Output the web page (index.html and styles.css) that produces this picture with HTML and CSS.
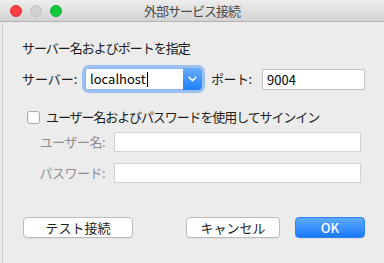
FILE: index.html
```html
<!DOCTYPE html>
<html lang="ja">
<head>
<meta charset="utf-8">
<title>外部サービス接続</title>
<link rel="stylesheet" href="styles.css">
</head>
<body>
<div class="window">
  <div class="titlebar">
    <div class="lights">
      <span class="light red"></span>
      <span class="light gray"></span>
      <span class="light green"></span>
    </div>
    <div class="title">外部サービス接続</div>
    <div></div>
  </div>
  <div class="content">
    <div class="heading">サーバー名およびポートを指定</div>
    <div class="row server-row">
      <span class="label server-label">サーバー:</span>
      <div class="combo">
        <div class="combo-field">localhost<span class="caret"></span></div>
        <div class="combo-btn">
          <svg width="9" height="6" viewBox="0 0 9 6"><path d="M1 1.2 L4.5 4.6 L8 1.2" fill="none" stroke="#fff" stroke-width="1.5" stroke-linecap="round" stroke-linejoin="round"/></svg>
        </div>
      </div>
      <span class="label port-label">ポート:</span>
      <div class="field port-field">9004</div>
    </div>
    <div class="row check-row">
      <span class="checkbox"></span>
      <span class="check-text">ユーザー名およびパスワードを使用してサインイン</span>
    </div>
    <div class="row cred-row first">
      <span class="label dim">ユーザー名:</span>
      <div class="field cred-field"></div>
    </div>
    <div class="row cred-row">
      <span class="label dim">パスワード:</span>
      <div class="field cred-field"></div>
    </div>
    <div class="row buttons">
      <div class="btn test">テスト接続</div>
      <div class="btn cancel">キャンセル</div>
      <div class="btn ok">OK</div>
    </div>
  </div>
</div>
</body>
</html>
```
FILE: styles.css
```css
html, body {
  margin: 0;
  padding: 0;
}
body {
  width: 384px;
  height: 263px;
  overflow: hidden;
  background: #ececec;
  font-family: "Noto Sans CJK JP", "Noto Sans", sans-serif;
  font-size: 13px;
  color: #1c1c1c;
}
.window {
  display: flex;
  flex-direction: column;
  height: 263px;
}
.titlebar {
  height: 21px;
  border-bottom: 1px solid #b3b3b3;
  background: linear-gradient(#ededed, #d3d3d3);
  display: grid;
  grid-template-columns: 1fr auto 1fr;
  align-items: center;
}
.lights {
  display: flex;
  gap: 8px;
  padding-left: 10px;
  padding-top: 1px;
}
.light {
  width: 12px;
  height: 12px;
  border-radius: 50%;
  box-sizing: border-box;
}
.red { background: #fc3d44; border: 1px solid #e0323a; }
.gray { background: #d1d1d1; border: 1px solid #c1c1c1; }
.green { background: #11c73a; border: 1px solid #0fae31; }
.title {
  color: #4a4a4a;
  font-size: 13px;
  line-height: 16px;
  letter-spacing: -1px;
}
.content {
  flex: 1;
  margin-left: 2px;
  border-left: 1px solid #cdcdcd;
  padding-left: 19px;
  display: flex;
  flex-direction: column;
}
.heading {
  margin-top: 18px;
  line-height: 16px;
  letter-spacing: -1px;
}
.row {
  display: flex;
  align-items: center;
  line-height: 16px;
}
.server-row {
  margin-top: 12px;
  height: 22px;
}
.label {
  white-space: nowrap;
}
.server-label { width: 63px; }
.combo {
  display: flex;
  height: 22px;
  width: 117px;
  border-radius: 4px;
  box-shadow: 0 0 0 3px rgba(92, 156, 247, 0.55);
}
.combo-field {
  flex: 1;
  background: #fff;
  border: 1px solid #8fb4ea;
  border-right: none;
  box-sizing: border-box;
  padding-left: 4px;
  line-height: 20px;
  color: #000;
  display: flex;
  align-items: center;
  border-radius: 2px 0 0 2px;
}
.caret {
  display: inline-block;
  width: 1px;
  height: 15px;
  background: #000;
  margin-left: 1px;
}
.combo-btn {
  width: 19px;
  background: linear-gradient(#69aefc, #1e7ff8);
  border-radius: 0 4px 4px 0;
  display: flex;
  align-items: center;
  justify-content: center;
}
.port-label {
  margin-left: 9px;
  width: 51px;
  letter-spacing: -0.5px;
}
.field {
  background: #fff;
  border: 1px solid #c3c3c3;
  box-sizing: border-box;
}
.port-field {
  width: 103px;
  height: 21px;
  padding-left: 4px;
  line-height: 19px;
  color: #000;
}
.check-row {
  margin-top: 19px;
  height: 16px;
}
.check-text {
  letter-spacing: -1.1px;
}
.checkbox {
  width: 13px;
  height: 13px;
  box-sizing: border-box;
  background: #fff;
  border: 1px solid #a8a8a8;
  border-radius: 3px;
  margin-left: 5px;
  margin-right: 6px;
}
.cred-row {
  margin-top: 11px;
}
.cred-row.first {
  margin-top: 7px;
}
.dim {
  color: #8e8e8e;
  width: 83px;
  text-align: right;
  margin-right: 9px;
  letter-spacing: -0.5px;
}
.cred-field {
  width: 247px;
  height: 20px;
  border-color: #d2d2d2;
}
.buttons {
  margin-top: 34px;
  align-items: flex-start;
}
.btn {
  height: 21px;
  box-sizing: border-box;
  border-radius: 4px;
  text-align: center;
  line-height: 19px;
  background: #fff;
  border: 1px solid #bcbcbc;
  box-shadow: 0 0.5px 0.5px rgba(0,0,0,0.08);
}
.test {
  width: 110px;
  margin-left: 1px;
}
.cancel {
  width: 94px;
  margin-left: 53px;
}
.ok {
  width: 70px;
  margin-left: 15px;
  background: linear-gradient(#5eaafd, #1a78fa);
  border-color: #2a84f6;
  color: #fff;
  font-weight: 500;
}
```
